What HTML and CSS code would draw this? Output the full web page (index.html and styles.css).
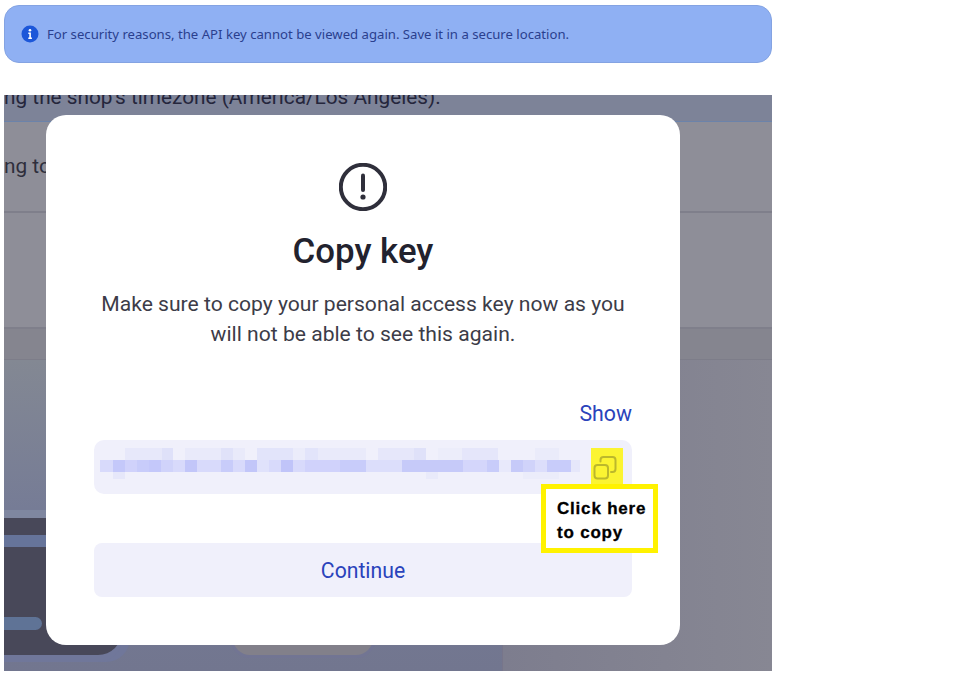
FILE: index.html
```html
<!DOCTYPE html>
<html lang="en">
  <head>
    <meta charset="UTF-8" />
    <meta name="viewport" content="width=device-width, initial-scale=1.0" />
    <title>Copy key</title>
    <link rel="stylesheet" href="styles.css">
  </head>
  <body>
    <div class="banner">
      <svg class="banner-icon" width="18" height="18" viewBox="0 0 18 18">
        <circle cx="9" cy="9" r="8.500" fill="#1c57d9" />
        <circle cx="9" cy="5.200" r="1.300" fill="#fff" />
        <path d="M7.300 7.600h2.600v5h1v1.300H7.300v-1.300h1v-3.700h-1z" fill="#fff" />
      </svg>
      <span>For security reasons, the API key cannot be viewed again. Save it in a secure location.</span>
    </div>

    <div class="shot">
      <div class="band">
        <p class="band-text">ng the shop's timezone (America/Los Angeles).</p>
      </div>
      <div class="row row-first"><p class="row-text">ng to</p></div>
      <div class="row row-second"></div>
      <div class="row row-third"></div>
      <div class="lower">
        <div class="divider"></div>
        <div class="panel">
          <div class="panel-bar"></div>
          <div class="panel-pill"></div>
        </div>
        <div class="nub"></div>
      </div>

      <div class="dialog">
        <svg class="alert-icon" width="48" height="48" viewBox="0 0 48 48">
          <circle cx="24" cy="24" r="22.200" fill="none" stroke="#2f2f3b" stroke-width="4" />
          <path d="M24 12.500v14.500" fill="none" stroke="#2f2f3b" stroke-width="4" stroke-linecap="round" />
          <circle cx="24" cy="34" r="2.600" fill="#2f2f3b" />
        </svg>
        <h1 class="title">Copy key</h1>
        <p class="message">Make sure to copy your personal access key now as you will not be able to see this again.</p>
        <div class="show">Show</div>
        <div class="field">
          <div class="key"></div>
          <div class="copy">
            <svg width="32" height="36" viewBox="0 0 32 36">
              <rect x="3.500" y="17" width="13.500" height="13.500" rx="3" fill="none" stroke="#bcb82c" stroke-width="2" />
              <path d="M9.500 13.500v-1.500a3 3 0 0 1 3-3h9a3 3 0 0 1 3 3v9a3 3 0 0 1-3 3h-1.500" fill="none" stroke="#bcb82c" stroke-width="2" stroke-linecap="round" />
            </svg>
          </div>
        </div>
        <div class="continue">Continue</div>
      </div>

      <div class="callout">Click here<br />to copy</div>
    </div>
  </body>
</html>
```

FILE: styles.css
```css
body {
  margin: 0;
  padding: 5px 4px 0;
  background: white;
  font-family: Roboto, sans-serif;
}
p,
h1 {
  margin: 0;
}

/* top notice */
.banner {
  width: 768px;
  height: 58px;
  box-sizing: border-box;
  display: flex;
  align-items: center;
  gap: 8px;
  padding-left: 16px;
  background: #8fb0f3;
  border: 1px solid #84a3e2;
  border-radius: 15px;
  color: #2a3f8e;
  font-family: "Noto Sans", sans-serif;
  font-size: 13.15px;
}
.banner-icon {
  flex: none;
}

/* dimmed page behind the dialog */
.shot {
  position: relative;
  width: 768px;
  height: 576px;
  margin-top: 32px;
  overflow: hidden;
  display: flex;
  flex-direction: column;
  background: #8a8a96;
  color: #25263c;
  font-size: 20.8px;
}
.band {
  height: 26px;
  flex: none;
  background: #7d8398;
  border-bottom: 1px solid #6c83aa;
}
.band-text {
  margin-top: -10px;
  line-height: 24px;
  white-space: nowrap;
}
.row {
  flex: none;
  box-sizing: border-box;
  background: #8e8e98;
  border-bottom: 2px solid #7f7f8b;
}
.row-first {
  height: 91px;
  padding-top: 32px;
}
.row-text {
  line-height: 24px;
  color: #2e2e3c;
}
.row-second {
  height: 116px;
}
.row-third {
  height: 31px;
  background: #85858f;
  border-bottom: 1px solid #7d7d89;
}
.lower {
  position: relative;
  flex: 1;
  background: linear-gradient(to bottom, #838893 0, #757b96 160px, #72768f 100%);
}
.divider {
  position: absolute;
  left: 498px;
  top: 0;
  bottom: 0;
  width: 1px;
  background: #77758a;
}
.lower::after {
  content: "";
  position: absolute;
  left: 499px;
  right: 0;
  top: 0;
  bottom: 0;
  background: linear-gradient(to right, #7d7d8e, #878793);
}
.panel {
  position: absolute;
  left: 0;
  top: 158px;
  width: 118px;
  height: 137px;
  background: #484859;
  border-radius: 0 0 24px 0;
  box-shadow: 0 -8px 0 #7f87a0, 0 7px 0 #70779a, 8px 7px 0 #70779a;
}
.panel-bar {
  height: 12px;
  margin-top: 17px;
  background: #66749a;
}
.panel-pill {
  width: 38px;
  height: 13px;
  margin-top: 70px;
  background: #5f7396;
  border-radius: 0 7px 7px 0;
}
.nub {
  position: absolute;
  left: 226px;
  bottom: 13px;
  width: 140px;
  height: 30px;
  background: #82808a;
  border: 3px solid #727593;
  border-radius: 0 0 20px 20px;
}

/* dialog */
.dialog {
  position: absolute;
  left: 42px;
  top: 20px;
  z-index: 1;
  width: 634px;
  height: 530px;
  box-sizing: border-box;
  padding: 48px;
  background: white;
  border-radius: 20px;
  text-align: center;
}
.alert-icon {
  display: block;
  margin: 0 auto;
}
.title {
  margin-top: 20px;
  font-size: 34.8px;
  font-weight: 500;
  line-height: 41px;
  color: #22222e;
}
.message {
  margin-top: 17px;
  font-size: 21.1px;
  line-height: 30px;
  color: #3c3c48;
}
.show {
  margin-top: 53px;
  font-size: 21.3px;
  line-height: 24px;
  text-align: right;
  color: #2a43bb;
}
.field {
  display: flex;
  align-items: flex-start;
  height: 54px;
  box-sizing: border-box;
  margin-top: 14px;
  padding: 8px 9px 0 6px;
  background: #f0f0fb;
  border-radius: 10px;
}
.key {
  flex: 1;
  height: 31px;
  background-repeat: no-repeat;
  background-size: 100% 12px, 100% 12px, 100% 7px;
  background-position: 0 0, 0 12px, 0 24px;
  background-image:
    linear-gradient(to right,
      transparent 25px, #e7e8fa 25px 62px, #dfe1f9 62px 73px, transparent 73px 85px,
      #e9eafa 85px 121px, #e0e2f9 121px 133px, #e9eafa 133px 145px, transparent 145px 157px,
      #e2e4fa 157px 193px, #ebecfa 193px 205px, #e2e4fa 205px 218px, #e9eafa 218px 266px,
      transparent 266px 278px, #e6e7fa 278px 314px, #dfe1f9 314px 326px, transparent 326px 338px,
      #ecedfa 338px 362px, #e5e6fa 362px 398px, transparent 398px 435px, #eaebfa 435px 459px,
      transparent 459px),
    linear-gradient(to right,
      #d8dafb 0 13px, #c4c8fa 13px 25px, #d0d2fb 25px 37px, #c8ccfa 37px 49px, #c4c8fa 49px 61px,
      #d0d3fa 61px 73px, #d8dafb 73px 85px, #c2c6f9 85px 97px, #d8dafb 97px 121px, #c8ccfa 121px 133px,
      #d8dafb 133px 145px, #c2c6f9 145px 157px, #e0e2fb 157px 169px, #d8dafb 169px 181px,
      #c0c4f9 181px 193px, #d8dafb 193px 205px, #d0d2fb 205px 240px, #c8ccfa 240px 266px,
      #dcdefb 266px 302px, #c6caf9 302px 363px, #d4d6fb 363px 387px, #c8ccfa 387px 399px,
      #e8e9fb 399px 411px, #c6caf9 411px 423px, #d0d3fa 423px 435px, #dcdefb 435px 447px,
      #c8ccfa 447px 471px, #e6e7fa 471px 480px, transparent 480px),
    linear-gradient(to right,
      transparent 13px, #e6e7fa 13px 25px, transparent 25px 326px, #e9eafa 326px 338px,
      transparent 338px 423px, #ebecfa 423px 459px, transparent 459px);
}
.copy {
  flex: none;
  width: 32px;
  height: 36px;
  background: #fbf432;
}
.copy svg {
  display: block;
}
.continue {
  height: 54px;
  margin-top: 49px;
  background: #f0f0fb;
  border-radius: 8px;
  font-size: 21.2px;
  line-height: 55px;
  color: #2a43bb;
}

/* annotation pasted over the screenshot */
.callout {
  position: absolute;
  left: 537px;
  top: 389px;
  z-index: 2;
  width: 117px;
  height: 69px;
  box-sizing: border-box;
  padding: 8px 0 0 11px;
  background: white;
  border: 5px solid #fff200;
  color: black;
  font-family: "Liberation Sans", sans-serif;
  font-size: 17px;
  font-weight: bold;
  letter-spacing: 0.8px;
  -webkit-text-stroke: 0.3px black;
  line-height: 24px;
  white-space: nowrap;
}
```
